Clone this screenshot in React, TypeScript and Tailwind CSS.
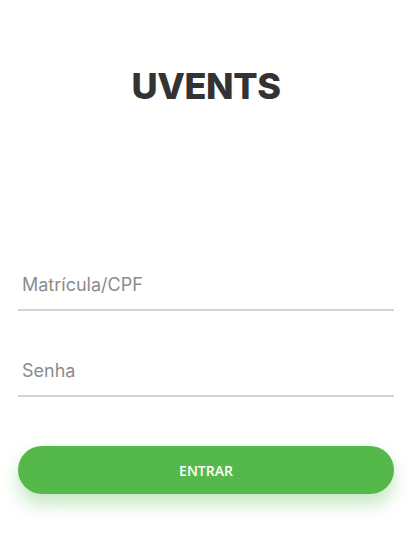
import React from "react";

export default function App() {
  return (
    <div className="min-h-[548px] w-full bg-white pl-[18px] pr-[17px]" style={{ fontFamily: "Inter, 'Open Sans', sans-serif" }}>
      <h1 className="pt-[68px] text-center text-[36px] font-extrabold leading-none tracking-[-0.4px] text-[#333333]">
        UVENTS
      </h1>
      <form className="mt-[155px] flex flex-col gap-[34px]" onSubmit={(e) => e.preventDefault()}>
        <input
          type="text"
          placeholder="Matrícula/CPF"
          className="h-[52px] w-full border-b-2 border-[#d4d4d4] bg-transparent px-[4px] text-[18px] text-[#333] outline-none placeholder:text-[#8c8c8c]"
        />
        <input
          type="password"
          placeholder="Senha"
          className="h-[52px] w-full border-b-2 border-[#d4d4d4] bg-transparent px-[4px] text-[18px] text-[#333] outline-none placeholder:text-[#8c8c8c]"
        />
      </form>
      <button
        type="button"
        className="mt-[49px] flex h-[48px] w-full items-center justify-center rounded-full bg-[#55b84a] text-[14px] font-semibold text-white shadow-[0_10px_18px_rgba(85,184,74,0.35)]"
        style={{ fontFamily: "'Open Sans', sans-serif" }}
      >
        ENTRAR
      </button>
    </div>
  );
}
